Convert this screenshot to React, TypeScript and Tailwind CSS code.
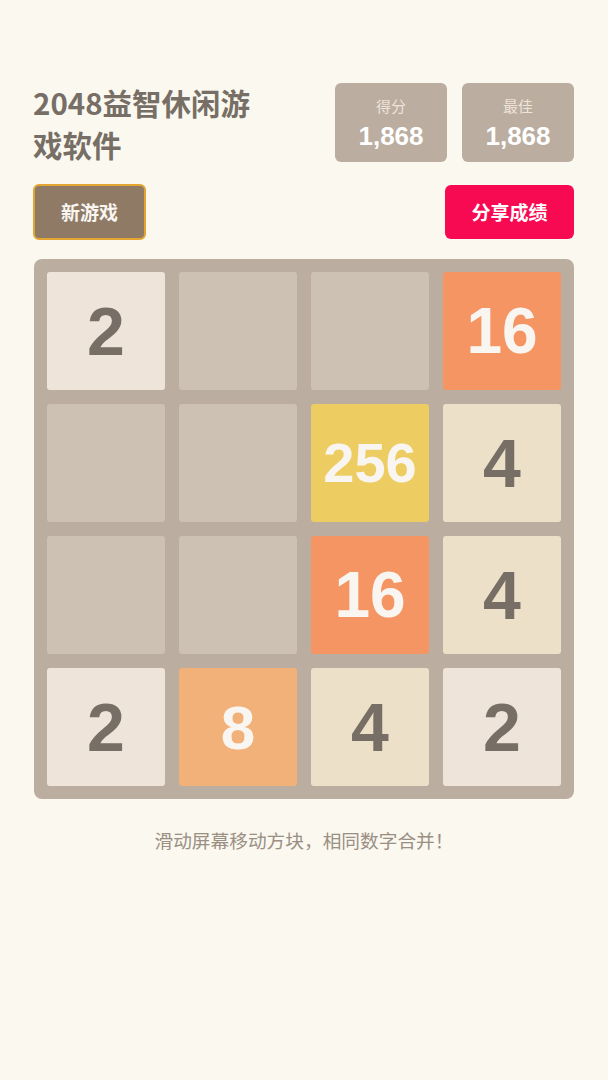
import React from "react";

const tiles: number[][] = [
  [2, 0, 0, 16],
  [0, 0, 256, 4],
  [0, 0, 16, 4],
  [2, 8, 4, 2],
];

function tileClass(v: number): string {
  switch (v) {
    case 2:
      return "bg-[#eee4da] text-[#776e65] text-[68px]";
    case 4:
      return "bg-[#ede0c8] text-[#776e65] text-[68px]";
    case 8:
      return "bg-[#f2b179] text-[#f9f6f2] text-[62px]";
    case 16:
      return "bg-[#f59563] text-[#f9f6f2] text-[64px]";
    case 256:
      return "bg-[#edcc61] text-[#f9f6f2] text-[56px]";
    default:
      return "bg-[#cdc1b4]";
  }
}

function ScoreBox({ label, value }: { label: string; value: string }) {
  return (
    <div className="flex h-[79px] w-[112px] flex-col items-center rounded-[6px] bg-[#bbada0] pt-[13px]">
      <span className="text-[15px] leading-[20px] text-[#eee4da]">{label}</span>
      <span className="mt-[5px] font-['Liberation_Sans',sans-serif] text-[26px] leading-[30px] font-bold text-white">
        {value}
      </span>
    </div>
  );
}

export default function App() {
  return (
    <div className="min-h-[1080px] w-full bg-[#faf8ef] font-['Noto_Sans_CJK_SC','Noto_Sans',sans-serif]">
      <div className="mx-auto w-[540px] pt-[81px]">
        <div className="flex items-start justify-between">
          <h1 className="w-[240px] -ml-[1px] text-[29.5px] leading-[42px] font-bold text-[#776e65]">
            2048益智休闲游戏软件
          </h1>
          <div className="mt-[2px] flex gap-[15px]">
            <ScoreBox label="得分" value="1,868" />
            <ScoreBox label="最佳" value="1,868" />
          </div>
        </div>

        <div className="mt-[19px] flex items-center justify-between">
          <button className="-ml-[1px] flex h-[56px] w-[113px] items-center justify-center rounded-[6px] border-2 border-[#e3a531] bg-[#8f7a66] text-[19px] font-bold text-[#f9f6f2]">
            新游戏
          </button>
          <button className="flex h-[54px] w-[129px] items-center justify-center rounded-[6px] bg-[#f80a52] text-[19px] font-bold text-white">
            分享成绩
          </button>
        </div>

        <div className="mt-[19px] grid grid-cols-4 gap-[14px] rounded-[8px] bg-[#bbada0] p-[13px]">
          {tiles.flat().map((v, i) => (
            <div
              key={i}
              className={`flex h-[118px] items-center justify-center rounded-[3px] font-['Liberation_Sans',Arial,sans-serif] font-bold ${tileClass(v)}`}
            >
              {v ? v : ""}
            </div>
          ))}
        </div>

        <p className="mt-[28px] text-center text-[18.7px] leading-[26px] text-[#9b8f84]">
          滑动屏幕移动方块，相同数字合并！
        </p>
      </div>
    </div>
  );
}
